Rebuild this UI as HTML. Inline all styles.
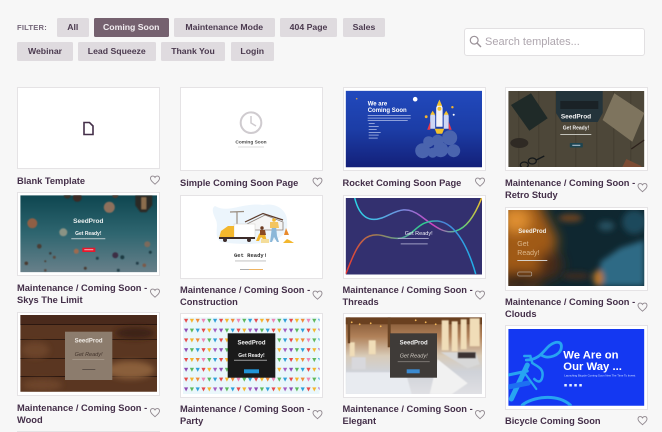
<!DOCTYPE html>
<html><head><meta charset="utf-8"><style>
html,body{margin:0;padding:0;width:662px;height:432px;overflow:hidden}
#w{position:absolute;left:0;top:0;width:662px;height:432px;background:#f7f7f7;overflow:hidden;font-family:"Liberation Sans",sans-serif}
.f{position:absolute;box-sizing:border-box;background:#dfdbdf;color:#4b3a4f;font-size:8.7px;font-weight:bold;text-align:center;line-height:19px;height:19px;border-radius:1.5px;white-space:nowrap}
.on{background:#75616f;color:#f2eef1}
.c{position:absolute;box-sizing:border-box;background:#fff;border:1px solid #e5e3e5;width:143px;height:83.5px}
.t{position:absolute;color:#442f49;font-size:9.3px;font-weight:bold;line-height:12px;white-space:nowrap}
</style></head><body><div id="w">
<div style="position:absolute;left:17px;top:23px;font-size:7.6px;font-weight:bold;letter-spacing:.2px;color:#75687a">FILTER:</div>
<div class="f" style="left:57px;top:18px;width:31.5px">All</div>
<div class="f on" style="left:94px;top:18px;width:74.5px">Coming Soon</div>
<div class="f" style="left:174px;top:18px;width:100.5px">Maintenance Mode</div>
<div class="f" style="left:280px;top:18px;width:57px">404 Page</div>
<div class="f" style="left:343px;top:18px;width:42px">Sales</div>
<div class="f" style="left:17px;top:42px;width:56px">Webinar</div>
<div class="f" style="left:78px;top:42px;width:77.5px">Lead Squeeze</div>
<div class="f" style="left:161px;top:42px;width:64px">Thank You</div>
<div class="f" style="left:230.500px;top:42px;width:43.500px">Login</div>

<div style="position:absolute;box-sizing:border-box;left:463.500px;top:28px;width:181.500px;height:27.500px;background:#fff;border:1px solid #e2e0e2;border-radius:3px"></div>
<svg style="position:absolute;left:469px;top:35px" width="13" height="13" viewBox="0 0 13 13"><circle cx="5.200" cy="5.200" r="3.900" fill="none" stroke="#9a9198" stroke-width="1.200"/><path d="M8 8l4 4" stroke="#9a9198" stroke-width="1.400"/></svg>
<div style="position:absolute;left:485px;top:35.500px;font-size:11px;line-height:13px;color:#aea6ae">Search templates...</div>

<div class="c" style="left:17px;top:87px;height:81.500px"></div>
<div class="c" style="left:180px;top:87px"></div>
<div class="c" style="left:342.500px;top:87px"></div>
<div class="c" style="left:505px;top:87px"></div>
<div class="c" style="left:17px;top:192px"></div>
<div class="c" style="left:180px;top:195px"></div>
<div class="c" style="left:342.500px;top:195px"></div>
<div class="c" style="left:505px;top:207px"></div>
<div class="c" style="left:17px;top:311.500px;height:84.500px"></div>
<div class="c" style="left:180px;top:313px;height:84.500px"></div>
<div class="c" style="left:342.500px;top:313px;height:84.500px"></div>
<div class="c" style="left:505px;top:325px;height:84.500px"></div>
<div style="position:absolute;left:17px;top:431px;width:143px;height:1px;background:#e5e3e5"></div>

<svg style="position:absolute;left:0;top:0;filter:blur(.3px)" width="662" height="432" viewBox="0 0 662 432" font-family="Liberation Sans, sans-serif">
<defs>
<filter id="b1"><feGaussianBlur stdDeviation=".6"/></filter>
<filter id="b2" x="-40%" y="-40%" width="180%" height="180%"><feGaussianBlur stdDeviation="3"/></filter>
<filter id="b3" x="-40%" y="-40%" width="180%" height="180%"><feGaussianBlur stdDeviation="6"/></filter>
<linearGradient id="gR" x1="0" y1="0" x2="0" y2="1"><stop offset="0" stop-color="#2149bd"/><stop offset=".5" stop-color="#1c3da6"/><stop offset="1" stop-color="#131f78"/></linearGradient>
<linearGradient id="gB" x1="0" y1="0" x2="0" y2="1"><stop offset="0" stop-color="#0e4650"/><stop offset=".5" stop-color="#2f6670"/><stop offset="1" stop-color="#68808a"/></linearGradient>
<linearGradient id="gT" x1="0" y1="0" x2="1" y2="0"><stop offset="0" stop-color="#ed3a33"/><stop offset=".22" stop-color="#a57b50"/><stop offset=".45" stop-color="#55a99a"/><stop offset=".6" stop-color="#2fd08e"/><stop offset=".75" stop-color="#4a83d8"/><stop offset="1" stop-color="#1fb2e8"/></linearGradient>
<linearGradient id="gT2" x1="0" y1="0" x2="1" y2="0"><stop offset="0" stop-color="#29d8e6"/><stop offset=".35" stop-color="#6d93e0"/><stop offset=".62" stop-color="#d23fc0"/><stop offset=".82" stop-color="#41cf8c"/><stop offset="1" stop-color="#f4c22b"/></linearGradient>
<linearGradient id="gE" x1="0" y1="0" x2="0" y2="1"><stop offset="0" stop-color="#7c5130"/><stop offset=".25" stop-color="#b08058"/><stop offset=".5" stop-color="#d8cbb8"/><stop offset=".7" stop-color="#cfd2d8"/><stop offset="1" stop-color="#e0e0e4"/></linearGradient>
<pattern id="flags" width="35" height="19.600" patternUnits="userSpaceOnUse" y="1.500" x="1">
<path d="M0 0h4.200l-2.100 4z" fill="#e64a4a"/><path d="M5.800 0h4.200l-2.100 4z" fill="#f5b52e"/><path d="M11.600 0h4.200l-2.100 4z" fill="#f08a3a"/><path d="M17.400 0h4.200l-2.100 4z" fill="#ef86b4"/><path d="M23.200 0h4.200l-2.100 4z" fill="#5cb85c"/><path d="M29 0h4.200l-2.100 4z" fill="#2f9fd8"/>
<path d="M0 9.800h4.200l-2.100 4z" fill="#8e4bb5"/><path d="M5.800 9.800h4.200l-2.100 4z" fill="#5cb85c"/><path d="M11.600 9.800h4.200l-2.100 4z" fill="#2f9fd8"/><path d="M17.400 9.800h4.200l-2.100 4z" fill="#e64a4a"/><path d="M23.200 9.800h4.200l-2.100 4z" fill="#f5b52e"/><path d="M29 9.800h4.200l-2.100 4z" fill="#a45bc0"/>
</pattern>
</defs>

<!-- blank doc icon -->
<path d="M84 122.500h5.500l3.500 3.500v8.500h-9z" fill="none" stroke="#442f49" stroke-width="1.600"/>

<!-- simple coming soon -->
<circle cx="251" cy="122.700" r="10.300" fill="none" stroke="#cfcbcf" stroke-width="2"/>
<path d="M251 116v7l5 3" fill="none" stroke="#cfcbcf" stroke-width="1.500"/>
<text x="251" y="143.500" font-size="4.800" font-weight="bold" fill="#4a4a4a" text-anchor="middle">Coming Soon</text>
<rect x="238" y="146.500" width="26" height="1" fill="#dcdcdc"/>

<!-- rocket -->
<svg x="345.700" y="90.700" width="136.300" height="76.600" viewBox="0 0 136.300 76.600">
<rect width="137" height="77" fill="url(#gR)"/>
<circle cx="69.500" cy="8.500" r="2.300" fill="#fff"/>
<g fill="#fff" font-weight="bold"><text x="22" y="15" font-size="6">We are</text><text x="22" y="21.500" font-size="6">Coming Soon</text></g>
<g fill="#a9b8e6"><rect x="22" y="24.500" width="43" height=".8"/><rect x="22" y="27" width="43" height=".8"/><rect x="22" y="29.500" width="40" height=".8"/><rect x="23" y="32.500" width="6" height=".8"/><rect x="23" y="35.500" width="10" height=".8"/><rect x="23" y="38.500" width="8" height=".8"/><rect x="23" y="41.500" width="12" height=".8"/><rect x="23" y="44" width="10" height=".8"/><rect x="23" y="47" width="9" height=".8"/></g>
<g fill="#4a64ae"><circle cx="77" cy="60" r="7.500"/><circle cx="87" cy="62" r="5"/><circle cx="95" cy="59" r="7.500"/><circle cx="108" cy="60" r="6.500"/><circle cx="104" cy="47" r="7.500"/><circle cx="92" cy="50" r="6"/><circle cx="83" cy="51" r="5.500"/></g>
<path d="M90.500 17L93.700 9l3.200 8v19h-6.400z" fill="#f2f2f8"/>
<path d="M91 15L93.700 9l2.700 6z" fill="#f4c22b"/><circle cx="93.700" cy="18" r="2" fill="#f4c22b"/>
<path d="M84.500 25l2.500-4 2.500 4v13h-5z" fill="#cdd6f4"/><path d="M98 25l2.500-4 2.500 4v13h-5z" fill="#cdd6f4"/>
<path d="M84.500 24l2.500-4 2.500 4z" fill="#f4c22b"/><path d="M98 24l2.500-4 2.500 4z" fill="#f4c22b"/>
<path d="M84.500 31l-3 8h3zM103 31l3 8h-3z" fill="#e8384a"/>
<path d="M89 38h9.500l-2 5h-5.500z" fill="#f4c22b"/>
<circle cx="80.500" cy="26" r="1.400" fill="#f4b42b"/><circle cx="106.700" cy="16.500" r="1.200" fill="#f4b42b"/><circle cx="108" cy="24" r="1" fill="#fff"/><circle cx="11" cy="8" r=".8" fill="#c89a50"/>
</svg>

<!-- retro -->
<svg x="508.300" y="91" width="136" height="76" viewBox="0 0 136 76">
<rect width="136" height="76" fill="#4d4739"/>
<g fill="#433e31"><rect x="10" width="1" height="76"/><rect x="30" width="1" height="76"/><rect x="47" width="1" height="76"/><rect x="67" width="1" height="76"/><rect x="88" width="1" height="76"/><rect x="105" width="1" height="76"/><rect x="122" width="1" height="76"/></g>
<path d="M22.700 2.300L39.400 27.300 21 39.700 2.700 14z" fill="#1f2a28"/>
<path d="M47.700 0h46.700v22l-5 9h-36l-5.700-9z" fill="#24343b"/><rect x="52" y="10" width="38" height="8" fill="#1a2226"/>
<path d="M106 2.300L136 22 124 50.700 94.300 29z" fill="#7e745e"/>
<ellipse cx="11" cy="52" rx="9" ry="5" fill="#2f2a24"/>
<g fill="none" stroke="#15191b" stroke-width="1.300"><ellipse cx="24" cy="70" rx="4" ry="3"/><ellipse cx="16" cy="74" rx="4" ry="3"/><path d="M28 69l8-4"/></g>
<path d="M118 68l15 7v3h-20z" fill="#7b4b33"/><path d="M123 58l13-9" stroke="#2d221c" stroke-width="1.300"/>
<text x="67.700" y="27.500" font-size="6.500" font-weight="bold" fill="#f3f3f3" text-anchor="middle">SeedProd</text>
<text x="67.700" y="38.500" font-size="5" font-weight="bold" fill="#f3f3f3" text-anchor="middle">Get Ready!</text>
<rect x="52" y="43" width="31" height=".9" fill="#cfcfc8"/>
<rect x="61.500" y="52" width="13" height="4.500" rx=".8" fill="#1d4450"/><rect x="64" y="53.800" width="8" height=".9" fill="#cde"/>
</svg>

<!-- balloons -->
<svg x="20.300" y="195.300" width="136.700" height="77" viewBox="0 0 136.700 77">
<rect width="137" height="77" fill="url(#gB)"/>
<g filter="url(#b1)">
<path d="M115 0h17v10l-6 7h-6l-5-7z" fill="#2c2c28"/><rect x="121" y="2" width="5" height="12" fill="#8b6d4e"/>
<circle cx="89" cy="12" r="5.500" fill="#8d705c"/>
<circle cx="57" cy="2" r="4.500" fill="#3a2c26"/><circle cx="47" cy="0" r="3.500" fill="#33302c"/><circle cx="95" cy="0" r="3" fill="#4a3a30"/>
<circle cx="12" cy="28" r="5" fill="#8f5f45"/><circle cx="43" cy="37" r="4" fill="#8a9384"/><circle cx="19" cy="51" r="2.300" fill="#4a3c34"/>
<circle cx="56" cy="56" r="2.500" fill="#9d6a50"/><circle cx="95" cy="60" r="3" fill="#3c2d44"/><circle cx="102" cy="62" r="2" fill="#1e3a42"/>
<circle cx="77" cy="63" r="1.500" fill="#24404a"/><circle cx="127" cy="49" r="3" fill="#7c6a5c"/><circle cx="130" cy="57" r="1.500" fill="#1e3a42"/>
<circle cx="117" cy="68" r="1.500" fill="#243c48"/><circle cx="124" cy="70" r="1.800" fill="#7c5a48"/><circle cx="30" cy="58" r="1.300" fill="#3a3c3c"/><circle cx="34" cy="62" r="1.500" fill="#5a4a40"/><circle cx="25" cy="66" r="1" fill="#4a3c34"/><circle cx="6" cy="68" r="1.800" fill="#4a3a30"/><circle cx="65" cy="73" r="1.500" fill="#4a3a30"/><circle cx="98" cy="75" r="1.500" fill="#24404a"/><circle cx="25" cy="75" r="1.300" fill="#5a4a40"/>
</g>
<text x="68" y="27.500" font-size="6.500" font-weight="bold" fill="#e8eeee" text-anchor="middle">SeedProd</text>
<text x="68" y="39.500" font-size="5" font-weight="bold" fill="#f3f3f3" text-anchor="middle">Get Ready!</text>
<rect x="51" y="43" width="34" height=".9" fill="#c8d4d6"/>
<rect x="62" y="52.400" width="13" height="4.300" fill="#e8182c"/><rect x="64" y="54" width="9" height=".9" fill="#f7c8cc"/>
</svg>

<!-- construction -->
<svg x="183" y="198" width="136" height="77" viewBox="0 0 136 77">
<path d="M32 8C45 16 60 4 80 7 95 4 105 14 104 24 106 36 96 40 88 44 70 47 50 46 38 44 30 38 36 30 33 22 30 16 28 10 32 8z" fill="#ecf5fc"/>
<path d="M47 14l14-.5M54 14v15" stroke="#9a8d80" stroke-width="1.200" fill="none"/>
<path d="M64 26L82 17 100 24v8H64z" fill="#f5f5f5" stroke="#8a7f78" stroke-width=".8"/><path d="M62 24L80 15.500 100 22" fill="none" stroke="#5b3a2a" stroke-width="1.200"/>
<rect x="51" y="26" width="21" height="14" fill="#fff" stroke="#d4d0cc" stroke-width=".5"/>
<path d="M36 40l2-7 7-5h6v12z" fill="#f3b72e"/><rect x="36" y="39" width="36" height="2" fill="#3d2c2a"/><circle cx="42" cy="42" r="2" fill="#3d2c2a"/><circle cx="66" cy="42" r="2" fill="#3d2c2a"/>
<path d="M73 43l3-7 3-3 3 3 2 8-3-2-3-3-2 4z" fill="#f0b52e"/><circle cx="79" cy="30" r="1.700" fill="#6c3a20"/><path d="M77 32h5l1 5h-6z" fill="#8a4a24"/>
<path d="M89 28l4 0 1 10 2 6-2 0-3-5-2 5-2 0 1-7z" fill="#8bb7d8"/><path d="M87 24h8l1 6h-9z" fill="#f3c560"/><circle cx="91" cy="22" r="1.800" fill="#f3b72e"/>
<rect x="78" y="41" width="8" height="4" fill="#f4dd9a"/><path d="M103 30l3 7h-5z" fill="#e88a2c"/>
<path d="M100 45l4-4 4 2 3 2z" fill="#f3b72e"/>
<text x="67.500" y="59" font-size="5.500" font-weight="bold" font-family="Liberation Mono, monospace" fill="#333" text-anchor="middle">Get Ready!</text>
<rect x="52" y="62.500" width="31" height=".9" fill="#bbb"/>
<rect x="57" y="71" width="9" height=".8" fill="#999"/><rect x="66" y="71" width="14" height=".8" fill="#e9a23b"/>
</svg>

<!-- threads -->
<svg x="345.700" y="198" width="136.300" height="76.500" viewBox="0 0 136.300 76.500">
<rect width="137" height="77" fill="#33306f"/>
<path d="M9 0C14 20 24 24 36 20S58 5 75 18 100 36 110 33 128 20 136 0" fill="none" stroke="url(#gT2)" stroke-width="1.500"/>
<path d="M0 76C6 62 12 42 24 38 36 34 42 42 56 40 70 36 72 22 92 23 112 25 124 55 130 76" fill="none" stroke="url(#gT)" stroke-width="1.500"/>
<text x="73" y="37" font-size="5.500" fill="#f0f0f8" text-anchor="middle">Get Ready!</text>
<rect x="52" y="40" width="31" height=".8" fill="#b8b8d8"/><rect x="55" y="45.500" width="27" height=".8" fill="#b8b8d8"/>
</svg>

<!-- clouds -->
<svg x="508.300" y="210" width="136" height="76" viewBox="0 0 136 76">
<rect width="136" height="76" fill="#0f2730"/>
<g filter="url(#b3)"><path d="M-10-10H30L50 30 30 80H-10z" fill="#a05a18"/><ellipse cx="8" cy="10" rx="14" ry="12" fill="#e09030"/><ellipse cx="12" cy="70" rx="26" ry="8" fill="#1f1a18"/><ellipse cx="42" cy="55" rx="12" ry="14" fill="#4a2c18"/></g>
<g filter="url(#b2)"><path d="M90 76L92 52 112 38 136 30V76z" fill="#2f6a85"/><ellipse cx="126" cy="12" rx="12" ry="12" fill="#1e4a5c"/><ellipse cx="98" cy="16" rx="8" ry="5" fill="#26505f"/><ellipse cx="90" cy="68" rx="5" ry="8" fill="#b5742c"/><ellipse cx="62" cy="8" rx="12" ry="4" fill="#6a4222"/><ellipse cx="68" cy="66" rx="14" ry="4" fill="#3a2a20"/></g>
<text x="10" y="23" font-size="6" font-weight="bold" fill="#f0ece4">SeedProd</text>
<text x="9" y="36" font-size="7" fill="#dcb78a">Get</text><text x="9" y="45" font-size="7" fill="#dcb78a">Ready!</text>
<rect x="9" y="50" width="30" height=".9" fill="#ddd"/>
<rect x="9.500" y="62" width="14" height="4" rx="1" fill="none" stroke="#ccc" stroke-width=".5"/>
</svg>

<!-- wood -->
<svg x="20.300" y="315" width="136.700" height="76.700" viewBox="0 0 136.700 76.700">
<rect width="137" height="77" fill="#5a3621"/>
<rect width="137" height="9" fill="#4a2a1c"/><rect y="9" width="137" height="1" fill="#2b1710"/>
<rect y="24" width="137" height="1" fill="#2f1b12"/><rect y="43" width="137" height="1" fill="#2f1b12"/><rect y="61" width="137" height="1" fill="#2b1710"/>
<g filter="url(#b2)"><ellipse cx="110" cy="55" rx="24" ry="9" fill="#8a5f3a"/><ellipse cx="15" cy="35" rx="14" ry="8" fill="#6d4529"/><ellipse cx="115" cy="18" rx="20" ry="6" fill="#3c2316"/><ellipse cx="22" cy="70" rx="20" ry="6" fill="#6d4529"/></g>
<rect x="44.700" y="16.700" width="47.300" height="48.300" fill="#8c7c6d"/>
<text x="68.300" y="27.500" font-size="6" font-weight="bold" fill="#efeae4" text-anchor="middle">SeedProd</text>
<text x="68.300" y="41" font-size="5.500" font-style="italic" fill="#43342c" text-anchor="middle">Get Ready!</text>
<rect x="52" y="44" width="32" height=".8" fill="#a89a8c"/><rect x="62" y="54" width="13" height="1" fill="#5c5048"/>
</svg>

<!-- party -->
<svg x="183" y="317.300" width="136.500" height="76.700" viewBox="0 0 136.500 76.700">
<rect width="137" height="77" fill="#eaf7fb"/>
<rect width="137" height="77" fill="url(#flags)"/>
<rect x="44.700" y="16" width="47.600" height="44.400" fill="#1a1a1a"/>
<text x="68.500" y="27" font-size="6" font-weight="bold" fill="#f0f0f0" text-anchor="middle">SeedProd</text>
<text x="68.500" y="39.500" font-size="5" font-weight="bold" fill="#f0f0f0" text-anchor="middle">Get Ready!</text>
<rect x="51" y="42.500" width="33" height=".9" fill="#aaa"/>
<rect x="61" y="52" width="15" height="4" fill="#2094d8"/>
</svg>

<!-- elegant -->
<svg x="345.700" y="317.300" width="136.300" height="76.700" viewBox="0 0 136.300 76.700">
<rect width="137" height="77" fill="url(#gE)"/>
<rect x="0" y="0" width="137" height="7" fill="#6a4020"/>
<g fill="#f0ddb8" filter="url(#b1)"><rect x="96" y="3" width="7" height="30"/><rect x="106" y="4" width="6" height="30"/><rect x="115" y="2" width="6" height="30"/><rect x="124" y="1" width="10" height="28"/><rect x="4" y="25" width="5" height="14"/><rect x="23" y="23" width="7" height="14"/></g>
<g fill="#f4b757"><circle cx="70" cy="3" r=".9"/><circle cx="80" cy="5" r=".9"/><circle cx="90" cy="7" r=".9"/><circle cx="6" cy="5" r=".9"/><circle cx="14" cy="7" r=".9"/><circle cx="25" cy="6" r=".9"/><circle cx="35" cy="9" r=".9"/></g>
<rect x="42" y="0" width="3" height="30" fill="#6a4424"/><rect x="2" y="0" width="2.500" height="26" fill="#6a4424"/>
<g filter="url(#b1)"><path d="M0 55h60l6 22H0z" fill="#e8ebf0"/><path d="M92 42l30 24-16 11-22 0z" fill="#f1f1f1"/><path d="M95 35h35l4 12-12 4z" fill="#d8d8d8"/><rect x="6" y="40" width="14" height="12" fill="#d8d8dc"/><rect x="112" y="35" width="18" height="6" fill="#3a3330"/></g>
<rect x="44.300" y="16" width="47" height="44.400" fill="#3f3b38"/>
<text x="68" y="27" font-size="6" font-weight="bold" fill="#f0f0f0" text-anchor="middle">SeedProd</text>
<text x="68" y="40" font-size="5.500" font-style="italic" fill="#cfcac2" text-anchor="middle">Get Ready!</text>
<rect x="52" y="44" width="32" height=".8" fill="#8a8580"/>
<rect x="61" y="52" width="13" height="4" fill="#3b8ad0"/>
</svg>

<!-- bicycle -->
<svg x="508.300" y="329" width="136" height="76.700" viewBox="0 0 136 76.700">
<rect width="136" height="77" fill="#1438f2"/>
<g fill="none" stroke="#27a4f2" stroke-linecap="round">
<path d="M18 31C32 31 36 20 42 16S54 12 53 19 40 31 33 26" stroke-width="2.800"/>
<path d="M16 27h6l2 7c4 3 12 5 10 14-1 5-4 6-8 2" stroke-width="2.500"/>
<path d="M19 36L3 70" stroke-width="5"/><path d="M0 46l19-4" stroke-width="3"/><path d="M0 58l20-4" stroke-width="5" stroke="#1d70f2"/><path d="M17 45L28 60" stroke-width="2.200"/>
<path d="M14 76C24 68 48 64 62 76" stroke-width="3"/>
</g>
<g fill="#fff" font-weight="bold"><text x="55" y="29.300" font-size="11.300">We Are on</text><text x="55" y="41" font-size="11.300">Our Way ...</text></g>
<text x="56" y="47.500" font-size="2.800" fill="#cfe0ff">Launching Bicycle Coming Soon New The Time To Invest</text>
<g fill="#e8f0ff"><rect x="56" y="55" width="2.500" height="2.500"/><rect x="61" y="55" width="2.500" height="2.500"/><rect x="66" y="55" width="2.500" height="2.500"/><rect x="71" y="55" width="2.500" height="2.500"/></g>
</svg>
</svg>

<div class="t" style="left:17px;top:175px">Blank Template</div>
<div class="t" style="left:180px;top:177px">Simple Coming Soon Page</div>
<div class="t" style="left:342.500px;top:177px">Rocket Coming Soon Page</div>
<div class="t" style="left:505px;top:177px">Maintenance / Coming Soon -<br>Retro Study</div>
<div class="t" style="left:17px;top:282px">Maintenance / Coming Soon -<br>Skys The Limit</div>
<div class="t" style="left:180px;top:284px">Maintenance / Coming Soon -<br>Construction</div>
<div class="t" style="left:342.500px;top:284px">Maintenance / Coming Soon -<br>Threads</div>
<div class="t" style="left:505px;top:296px">Maintenance / Coming Soon -<br>Clouds</div>
<div class="t" style="left:17px;top:401.500px">Maintenance / Coming Soon -<br>Wood</div>
<div class="t" style="left:180px;top:403px">Maintenance / Coming Soon -<br>Party</div>
<div class="t" style="left:342.500px;top:403px">Maintenance / Coming Soon -<br>Elegant</div>
<div class="t" style="left:505px;top:415px">Bicycle Coming Soon</div>

<svg style="position:absolute;left:0;top:0" width="662" height="432" viewBox="0 0 662 432">
<defs><path id="ht" d="M0 -2.600C-1 -4.500 -4.500 -4.700 -4.500 -1.500C-4.500 .8 -1.500 2.800 0 4.200C1.500 2.800 4.500 .8 4.500 -1.500C4.500 -4.700 1 -4.500 0 -2.600z" fill="none" stroke="#8f878e" stroke-width=".9"/></defs>
<use href="#ht" x="155" y="180"/>
<use href="#ht" x="317.500" y="182"/>
<use href="#ht" x="480" y="182"/>
<use href="#ht" x="642.500" y="187.500"/>
<use href="#ht" x="155" y="293"/>
<use href="#ht" x="317.500" y="295"/>
<use href="#ht" x="480" y="295"/>
<use href="#ht" x="642.500" y="307"/>
<use href="#ht" x="155" y="412.500"/>
<use href="#ht" x="317.500" y="414.500"/>
<use href="#ht" x="480" y="414.500"/>
<use href="#ht" x="642.500" y="420.500"/>
</svg>
</div></body></html>
